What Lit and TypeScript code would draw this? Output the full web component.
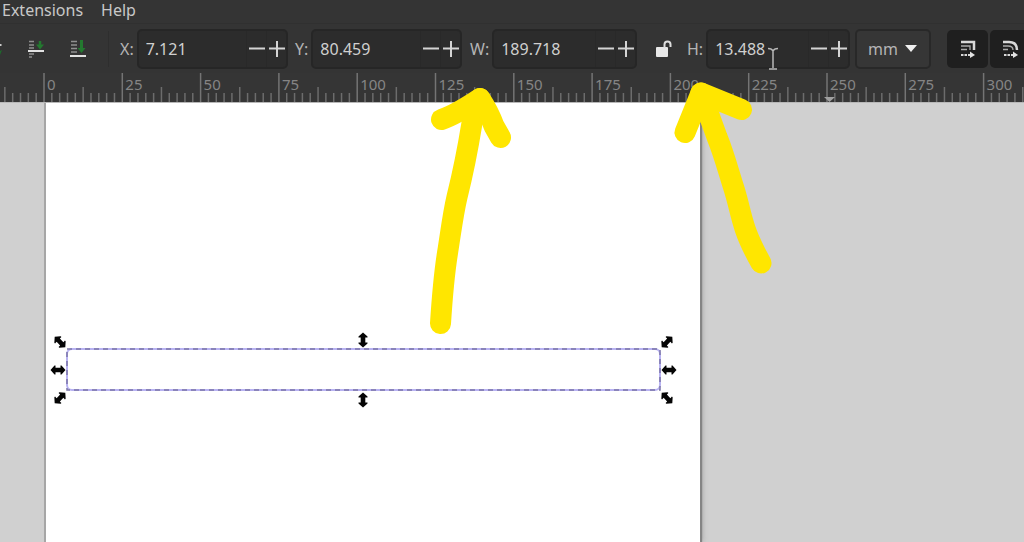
import { LitElement, html, svg, css } from "lit";
import { customElement, property, state } from "lit/decorators.js";

const ORIGIN = 44;
const STEP = 783 / 100;
const NUMBER_WIDTH = 32;

@customElement("number-field")
class NumberField extends LitElement {
  @property() label = "";
  @property() name = "";
  @property() value = "";

  static styles = css`
    :host { display: flex; align-items: center; gap: 3px; flex: none; }
    .label { color: #b4b4b4; font-size: 16px; line-height: 20px; white-space: nowrap; text-align: right; }
    .box {
      flex: 1; min-width: 0; display: flex; height: 40px; box-sizing: border-box;
      border: 2px solid #262626; border-radius: 5px; background: #2c2c2c;
    }
    .input {
      flex: 1; min-width: 0; border: 0; padding: 0 0 0 7px; background: none; outline: none;
      color: #d0d0d0; font: 16px/20px "Noto Sans", "Open Sans", sans-serif;
    }
    .step {
      width: 20px; border: 0; border-left: 1px solid #292929; padding: 0; background: none;
      display: flex; align-items: center; justify-content: center;
    }
  `;

  render() {
    return html`
      <label class="label" for="value">${this.label}</label>
      <div class="box">
        <input class="input" id="value" type="text" inputmode="decimal" .value=${this.value} />
        <button class="step" aria-label="Decrease ${this.name}">
          <svg width="16" height="16"><path d="M0 7.500H16" stroke="#d4d4d4" stroke-width="2" /></svg>
        </button>
        <button class="step" aria-label="Increase ${this.name}">
          <svg width="16" height="16"><path d="M0 7.500H16M8 0V16" stroke="#d4d4d4" stroke-width="2" /></svg>
        </button>
      </div>
    `;
  }
}

@customElement("horizontal-ruler")
class HorizontalRuler extends LitElement {
  @state() private span = window.innerWidth;

  private measure = () => { this.span = window.innerWidth; };

  static styles = css`
    :host { display: block; height: 29px; background: #353535; overflow: hidden; }
    .scale { display: block; width: 100%; height: 29px; }
    .number { fill: #858585; font: 15px "Noto Sans", "Open Sans", sans-serif; }
  `;

  connectedCallback() {
    super.connectedCallback();
    window.addEventListener("resize", this.measure);
  }

  disconnectedCallback() {
    window.removeEventListener("resize", this.measure);
    super.disconnectedCallback();
  }

  render() {
    const marks = [];
    for (let i = -5; ORIGIN + i * STEP < this.span; i++) {
      const x = ORIGIN + i * STEP;
      const top = i % 10 === 0 ? 0 : i % 5 === 0 ? 14 : 20;
      marks.push(svg`<path d="M${x} ${top}V29" stroke=${i % 10 === 0 ? "#747474" : "#6c6c6c"} stroke-width="1.5" />`);
      if (i % 10 === 0 && x + NUMBER_WIDTH < this.span) {
        marks.push(svg`<text class="number" x=${x + 3} y="17">${i * 2.5}</text>`);
      }
    }
    return html`<svg class="scale">${marks}<path d="M824 24h11l-5.500 5z" fill="#a0a0a0" /></svg>`;
  }
}

@customElement("drawing-canvas")
class DrawingCanvas extends LitElement {
  static styles = css`
    :host { display: block; flex: 1; min-height: 0; position: relative; overflow: hidden; background: #d0d0d0; border-top: 1px solid #b8b8b8; }
    .sheet {
      position: absolute; left: 46px; top: 0; bottom: 0; width: 654px; background: #fff;
      box-shadow: -2px 0 0 #a6a6a6, 2px 0 1px #858585, 3px 0 5px #aaa;
    }
    .objects { position: absolute; left: 0; top: 0; width: 100%; height: 100%; }
  `;

  render() {
    const handles = [
      [60, 239, 45], [363, 237, 90], [667, 239, -45],
      [58, 267, 0], [669, 267, 0],
      [60, 295, -45], [363, 297, 90], [667, 295, 45],
    ];
    return html`
      <div class="sheet"></div>
      <svg class="objects">
        <rect x="67" y="246" width="593" height="41" rx="5" fill="none" stroke="#b8b2f2" stroke-width="2" />
        <rect x="67" y="246" width="593" height="41" fill="none" stroke="#7b75a8" stroke-width="1.500" stroke-dasharray="5 4" />
        ${handles.map(([x, y, turn]) => svg`
          <path transform="translate(${x} ${y}) rotate(${turn})" fill="#050505"
            d="M-7.500 0L-3.500 -4.500H-2.500V-2.300H2.500V-4.500H3.500L7.500 0L3.500 4.500H2.500V2.300H-2.500V4.500H-3.500Z" />`)}
      </svg>
    `;
  }
}

@customElement("app-root")
class AppRoot extends LitElement {
  static styles = css`
    :host {
      display: flex; flex-direction: column; position: relative; height: 100vh; overflow: hidden;
      background: #343434; font-family: "Noto Sans", "Open Sans", sans-serif;
    }
    .menu { display: flex; gap: 18px; height: 23px; padding-left: 2px; border-bottom: 1px solid #303030; }
    .item { border: 0; padding: 0; background: none; color: #c8c8c8; font: 16px/20px "Noto Sans", "Open Sans", sans-serif; height: 20px; }
    .toolbar { display: flex; align-items: center; height: 49px; overflow: hidden; }
    .tool { border: 0; padding: 0; background: none; flex: none; display: flex; }
    .align { width: 42px; }
    .cut { width: 28px; }
    .rule { flex: none; width: 1px; height: 36px; margin-left: -4px; background: #2e2e2e; }
    .x { width: 168px; margin-left: 11px; }
    .y { width: 167px; margin-left: 7px; }
    .w { width: 167px; margin-left: 8px; }
    .h { width: 163px; margin-left: 15px; }
    .lock { margin-left: 19px; }
    .unit { position: relative; flex: none; margin: 0 16px 0 5px; }
    .select {
      appearance: none; display: block; width: 76px; height: 40px; padding: 0 0 0 11px; border: 2px solid #282828;
      border-radius: 5px; background: #363636; color: #b4b4b4; font: 16px/20px "Noto Sans", "Open Sans", sans-serif;
    }
    .caret { position: absolute; right: 14px; top: 16px; pointer-events: none; }
    .toggle {
      flex: none; width: 41px; height: 38px; margin-right: 2px; padding: 0; border: 0; border-radius: 5px;
      background: #1f1f1f; display: flex; align-items: center; justify-content: center;
    }
    .notes { position: absolute; left: 0; top: 0; width: 100%; height: 100%; pointer-events: none; }
  `;

  render() {
    return html`
      <nav class="menu">
        <button class="item">Extensions</button>
        <button class="item">Help</button>
      </nav>
      <div class="toolbar">
        <button class="tool cut" aria-label="Raise">
          <svg width="16" height="18"><path d="M0 5H1.500" stroke="#ccc" stroke-width="2" /><path d="M0 11L2 10L0 15" fill="#1d6b2b" /></svg>
        </button>
        <button class="tool align" aria-label="Lower selection">
          <svg width="16" height="18" fill="none">
            <path d="M1 1.500H6M1 5H6M1 8H6M1 14H6M1 17H4" stroke="#8f8f8f" stroke-width="1.500" />
            <path d="M0 11H16" stroke="#e2e2e2" stroke-width="2" />
            <path d="M12 1V6" stroke="#23792f" stroke-width="2.500" /><path d="M8 4.500H16L12 9.500Z" fill="#23792f" />
          </svg>
        </button>
        <button class="tool align" aria-label="Lower to bottom">
          <svg width="16" height="18" fill="none">
            <path d="M1 1.500H7M1 5H7M1 8.500H7M1 12H7" stroke="#8f8f8f" stroke-width="1.500" />
            <path d="M0 16H16" stroke="#e2e2e2" stroke-width="2" />
            <path d="M11.500 0V10" stroke="#23792f" stroke-width="3" /><path d="M7.500 8H15.500L11.500 13Z" fill="#23792f" />
          </svg>
        </button>
        <div class="rule"></div>
        <number-field class="x" label="X:" name="X" value="7.121"></number-field>
        <number-field class="y" label="Y:" name="Y" value="80.459"></number-field>
        <number-field class="w" label="W:" name="width" value="189.718"></number-field>
        <button class="tool lock" aria-label="Lock proportions">
          <svg width="16" height="18">
            <rect x="0" y="7" width="12" height="10" rx="1" fill="#e8e8e8" />
            <path d="M8.500 8V4.500a3 3 0 0 1 6 0V7" fill="none" stroke="#dedede" stroke-width="2" />
          </svg>
        </button>
        <number-field class="h" label="H:" name="height" value="13.488"></number-field>
        <div class="unit">
          <select class="select" aria-label="Unit"><option>mm</option></select>
          <svg class="caret" width="12" height="8"><path d="M0 0H12L6 7Z" fill="#f0f0f0" /></svg>
        </div>
        <button class="toggle" aria-label="Scale stroke width">
          <svg width="16" height="18" fill="none" stroke="#d8d8d8">
            <path d="M1 2H14V10" stroke-width="2.500" /><path d="M1 6H10V10M1 9.500H7" stroke-width="1.300" stroke="#aaa" />
            <path d="M1 15H10" stroke-width="2" stroke-dasharray="2.500 1" /><path d="M10 11.500L15 15L10 18Z" fill="#e4e4e4" stroke="none" />
          </svg>
        </button>
        <button class="toggle" aria-label="Scale rounded corners">
          <svg width="16" height="18" fill="none" stroke="#d8d8d8">
            <path d="M0 2H6Q14 2 14 10" stroke-width="2.500" /><path d="M0 6H5Q10 6 10 10M0 9.500H5" stroke-width="1.300" stroke="#aaa" />
            <path d="M1 15H10" stroke-width="2" stroke-dasharray="2.500 1" /><path d="M10 11.500L15 15L10 18Z" fill="#e4e4e4" stroke="none" />
          </svg>
        </button>
      </div>
      <horizontal-ruler></horizontal-ruler>
      <drawing-canvas></drawing-canvas>
      <svg class="notes" fill="none" aria-hidden="true">
        <path d="M768 48.500Q772 48.500 773 51Q774 48.500 778 48.500M773 51V68M769 69H777" stroke="#b8b8b8" stroke-width="1.500" />
        <g stroke="#ffe600" stroke-width="21" stroke-linecap="round" stroke-linejoin="round">
          <path d="M440.500 323.500C442 300 444 275 447.500 253C451 231 453 214 457 197C461 181 466 160 472 123L480 98.500" />
          <path d="M441.500 119.500Q455 115 480 98.500Q489 112 494 126L500.500 137.500" />
          <path d="M761 263C756 254 750 243 745.500 230C740 214 739 204 733.500 187C728 170 724 154 717 137L701 93" />
          <path d="M685 132.500L701 93L741.500 109.500" />
        </g>
      </svg>
    `;
  }
}
